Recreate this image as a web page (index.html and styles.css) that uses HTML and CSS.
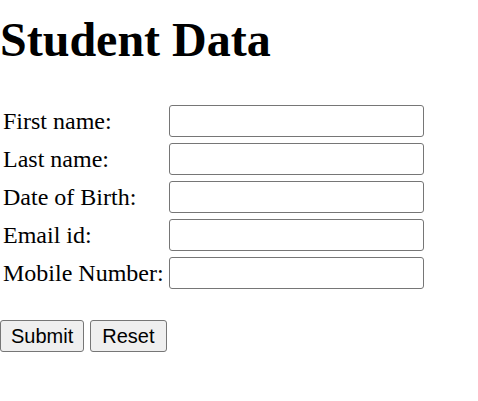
FILE: index.html
```html
<!DOCTYPE html>
<html>
<head>
<meta charset="utf-8">
<title>Student Data</title>
<link rel="stylesheet" href="styles.css">
</head>
<body>
<h1 class="title">Student Data</h1>
<form class="form">
  <div class="fields">
    <label class="label" for="fn">First name:</label><input class="field" id="fn" type="text">
    <label class="label" for="ln">Last name:</label><input class="field" id="ln" type="text">
    <label class="label" for="dob">Date of Birth:</label><input class="field" id="dob" type="text">
    <label class="label" for="em">Email id:</label><input class="field" id="em" type="text">
    <label class="label" for="mn">Mobile Number:</label><input class="field" id="mn" type="text">
  </div>
  <div class="actions">
    <button class="btn" type="submit">Submit</button>
    <button class="btn btn-reset" type="reset">Reset</button>
  </div>
</form>
</body>
</html>
```
FILE: styles.css
```css
html, body {
  margin: 0;
  padding: 0;
  background: #fff;
}
body {
  font-family: "Liberation Serif", "Times New Roman", serif;
  color: #000;
}
.title {
  margin: 12px 0 0;
  font-size: 48px;
  line-height: 55px;
  font-weight: bold;
}
.form {
  margin: 38px 0 0;
}
.fields {
  display: grid;
  grid-template-columns: max-content 255px;
  justify-content: start;
  column-gap: 5px;
  row-gap: 6px;
  padding-left: 3px;
  align-items: center;
}
.label {
  font-size: 24px;
  line-height: 27px;
}
.field {
  box-sizing: border-box;
  width: 255px;
  height: 32px;
  margin: 0;
  border: 1px solid #767676;
  border-radius: 3px;
  background: #fff;
  font-size: 20px;
  padding: 0 3px;
}
.actions {
  margin-top: 31px;
  display: flex;
  gap: 6px;
}
.btn {
  box-sizing: border-box;
  height: 32px;
  margin: 0;
  padding: 0 10px;
  border: 1px solid #767676;
  border-radius: 3px;
  background: #efefef;
  color: #000;
  font-family: "Liberation Sans", Arial, sans-serif;
  font-size: 20px;
}
.btn-reset {
  padding: 0 11px;
}
```
